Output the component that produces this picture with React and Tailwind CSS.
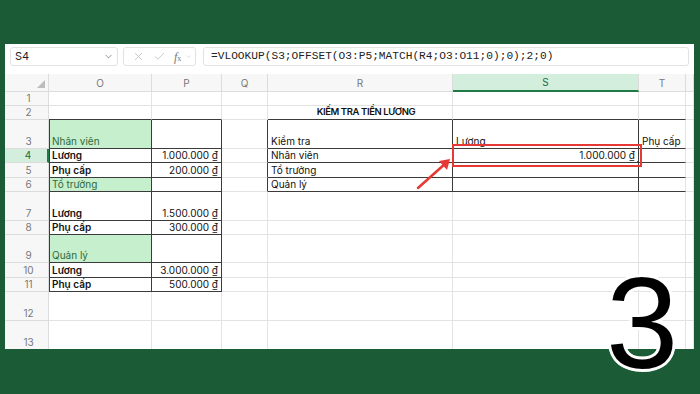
import React from 'react';
import { ChevronDown, X, Check } from 'lucide-react';

const COLS = [
  { k: 'O', w: 103 },
  { k: 'P', w: 70 },
  { k: 'Q', w: 46 },
  { k: 'R', w: 185 },
  { k: 'S', w: 186 },
  { k: 'T', w: 47 },
  { k: '_', w: 8 },
];
const ROW_H = [14, 14, 29, 14, 15, 14, 29, 14, 28, 15, 14, 29, 29];

const CELLS = {
  O3: { t: 'Nhân viên', green: true },
  O4: { t: 'Lương', bold: true },
  P4: { t: '1.000.000 ₫', right: true },
  O5: { t: 'Phụ cấp', bold: true },
  P5: { t: '200.000 ₫', right: true },
  O6: { t: 'Tổ trưởng', green: true },
  O7: { t: 'Lương', bold: true },
  P7: { t: '1.500.000 ₫', right: true },
  O8: { t: 'Phụ cấp', bold: true },
  P8: { t: '300.000 ₫', right: true },
  O9: { t: 'Quản lý', green: true },
  O10: { t: 'Lương', bold: true },
  P10: { t: '3.000.000 ₫', right: true },
  O11: { t: 'Phụ cấp', bold: true },
  P11: { t: '500.000 ₫', right: true },
  R2: { t: 'KIẾM TRA TIỀN LƯƠNG', title: true },
  R3: { t: 'Kiểm tra' },
  S3: { t: 'Lương' },
  T3: { t: 'Phụ cấp' },
  R4: { t: 'Nhân viên' },
  S4: { t: '1.000.000 ₫', right: true },
  R5: { t: 'Tổ trưởng' },
  R6: { t: 'Quản lý' },
};

function inTable(r, ci) {
  const k = COLS[ci]?.k;
  if (r >= 3 && r <= 11 && (k === 'O' || k === 'P')) return true;
  if (r >= 3 && r <= 6 && (k === 'R' || k === 'S' || k === 'T')) return true;
  return false;
}

function Cell({ r, ci }) {
  const col = COLS[ci];
  const id = col.k + r;
  const cell = CELLS[id];
  const darkRight = col.k !== 'T' && (inTable(r, ci) || inTable(r, ci + 1));
  const darkBottom = inTable(r, ci) || inTable(r + 1, ci);
  const leftEdge = col.k === 'O' && inTable(r, ci);

  return (
    <div
      className={[
        'relative flex items-end px-[3px] pb-[1px] border-r border-b whitespace-nowrap leading-[12px]',
        darkRight ? 'border-r-[#3b3b3b]' : 'border-r-[#e3e3e3]',
        darkBottom ? 'border-b-[#3b3b3b]' : 'border-b-[#e3e3e3]',
        leftEdge ? 'shadow-[inset_1px_0_0_#3b3b3b]' : '',
        cell?.green ? 'bg-[#c6efce] text-[#2f6b3a]' : 'text-[#111]',
        cell?.right ? 'justify-end' : '',
        cell?.title ? 'justify-center pl-[15px] overflow-visible' : 'overflow-hidden',
        cell?.bold || cell?.title ? 'font-semibold' : '',
      ].join(' ')}
    >
      {cell && <span className={cell.title ? 'tracking-[-0.4px] text-[9.5px]' : ''}>{cell.t}</span>}
      {id === 'S4' && (
        <div className="absolute inset-[-1px] border-[1.5px] border-[#1f7a45]">
          <div className="absolute right-[-3px] bottom-[-3px] w-[5px] h-[5px] bg-[#1f7a45] border border-white" />
        </div>
      )}
    </div>
  );
}

function FormulaBar() {
  return (
    <div className="flex items-center h-[19px] mt-[3px] px-[5px] gap-[5px]">
      <div className="w-[108px] h-full border border-[#e2e2e2] rounded-[3px] flex items-center justify-between pl-[4px] pr-[3px] text-[11px] text-[#222]">
        <span>S4</span>
        <ChevronDown size={11} strokeWidth={1.5} className="text-[#666]" />
      </div>
      <div className="w-[73px] h-full border border-[#e2e2e2] rounded-[3px] flex items-center gap-[8px] pl-[8px] text-[#b5b5b5]">
        <X size={13} strokeWidth={1.3} />
        <Check size={13} strokeWidth={1.3} />
        <span className="font-['Liberation_Serif',serif] italic text-[12px] text-[#777] leading-none">
          f<span className="text-[8px] not-italic">x</span>
        </span>
        <ChevronDown size={7} strokeWidth={1.5} className="text-[#bbb] -ml-[4px]" />
      </div>
      <div className="flex-1 ml-[2px] h-full border border-[#e2e2e2] rounded-[3px] flex items-center pl-[7px] font-['Liberation_Mono',monospace] text-[11.2px] text-[#222]">
        =VLOOKUP(S3;OFFSET(O3:P5;MATCH(R4;O3:O11;0);0);2;0)
      </div>
    </div>
  );
}

function Grid() {
  const template = `44px ${COLS.map((c) => c.w + 'px').join(' ')}`;
  const rows = `18px ${ROW_H.map((h) => h + 'px').join(' ')}`;
  return (
    <div className="grid mt-[8px] leading-[12px]" style={{ gridTemplateColumns: template, gridTemplateRows: rows }}>
      {/* corner */}
      <div className="relative bg-[#f7f7f7] border-r border-b border-[#dcdcdc]">
        <svg className="absolute right-[3px] bottom-[3px]" width="8" height="8" viewBox="0 0 8 8">
          <path d="M8 0 L8 8 L0 8 Z" fill="#bdbdbd" />
        </svg>
      </div>
      {COLS.map((c) =>
        c.k === 'S' ? (
          <div key={c.k} className="bg-[#d3eedc] border-r border-r-[#dcdcdc] border-b-2 border-b-[#1f7a45] flex items-center justify-center text-[10px] text-[#1f6b3c]">
            S
          </div>
        ) : (
          <div key={c.k} className="bg-[#f7f7f7] border-r border-b border-[#dcdcdc] flex items-center justify-center text-[10px] text-[#777]">
            {c.k === '_' ? '' : c.k}
          </div>
        )
      )}
      {ROW_H.map((_, i) => {
        const r = i + 1;
        return (
          <React.Fragment key={r}>
            {r === 4 ? (
              <div className="bg-[#d3eedc] border-r-2 border-r-[#1f7a45] border-b border-b-[#dcdcdc] flex items-end justify-center pl-[4px] pb-[1px] text-[10px] text-[#1f6b3c]">
                {r}
              </div>
            ) : (
              <div className="bg-[#f7f7f7] border-r border-b border-[#dcdcdc] flex items-end justify-center pl-[4px] pb-[1px] text-[10px] text-[#777]">
                {r}
              </div>
            )}
            {COLS.map((c, ci) => (
              <Cell key={c.k} r={r} ci={ci} />
            ))}
          </React.Fragment>
        );
      })}
    </div>
  );
}

export default function App() {
  return (
    <div className="relative w-[700px] h-[394px] bg-[#1b5c37] overflow-hidden font-['Inter',sans-serif] text-[10px]">
      <div className="ml-[5px] pt-[44px]">
        <div className="w-[689px] h-[305px] bg-white overflow-hidden">
          <FormulaBar />
          <Grid />
        </div>
      </div>

      {/* red highlight box */}
      <div className="absolute left-[452px] top-[144px] w-[190px] h-[23px] border-2 border-[#e53935]" />

      {/* red arrow */}
      <svg className="absolute left-[410px] top-[150px]" width="50" height="50" viewBox="0 0 50 50">
        <line x1="8" y1="38" x2="36" y2="13" stroke="#e53935" strokeWidth="2.5" strokeLinecap="round" />
        <path d="M29 11 L40 9 L37 20 Z" fill="#e53935" />
      </svg>

      {/* step number */}
      <div className="absolute left-[606px] top-[258px] font-['Liberation_Sans',sans-serif] text-[130px] leading-none text-black [text-shadow:3px_0_0_#fff,-3px_0_0_#fff,0_3px_0_#fff,0_-3px_0_#fff,2px_2px_0_#fff,-2px_-2px_0_#fff,2px_-2px_0_#fff,-2px_2px_0_#fff]">
        3
      </div>
    </div>
  );
}
